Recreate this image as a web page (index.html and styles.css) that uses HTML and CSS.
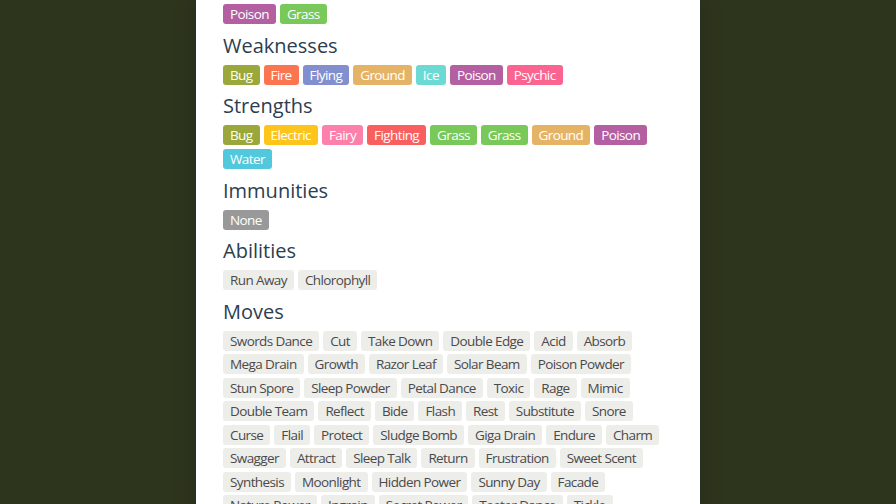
FILE: index.html
```html
<!DOCTYPE html>
<html lang="en">
<head>
<meta charset="utf-8">
<title>Pokémon</title>
<link rel="stylesheet" href="styles.css">
</head>
<body>
<main class="panel">
  <div class="tags">
    <span class="tag poison">Poison</span><span class="tag grass">Grass</span>
  </div>
  <h2>Weaknesses</h2>
  <div class="tags">
    <span class="tag bug">Bug</span><span class="tag fire">Fire</span><span class="tag flying">Flying</span><span class="tag ground">Ground</span><span class="tag ice">Ice</span><span class="tag poison">Poison</span><span class="tag psychic">Psychic</span>
  </div>
  <h2>Strengths</h2>
  <div class="tags">
    <span class="tag bug">Bug</span><span class="tag electric">Electric</span><span class="tag fairy">Fairy</span><span class="tag fighting">Fighting</span><span class="tag grass">Grass</span><span class="tag grass">Grass</span><span class="tag ground">Ground</span><span class="tag poison">Poison</span><span class="tag water">Water</span>
  </div>
  <h2>Immunities</h2>
  <div class="tags">
    <span class="tag none">None</span>
  </div>
  <h2>Abilities</h2>
  <div class="tags">
    <span class="tag plain">Run Away</span><span class="tag plain">Chlorophyll</span>
  </div>
  <h2>Moves</h2>
  <div class="tags moves">
    <span class="tag plain">Swords Dance</span><span class="tag plain">Cut</span><span class="tag plain">Take Down</span><span class="tag plain">Double Edge</span><span class="tag plain">Acid</span><span class="tag plain">Absorb</span>
    <span class="tag plain">Mega Drain</span><span class="tag plain">Growth</span><span class="tag plain">Razor Leaf</span><span class="tag plain">Solar Beam</span><span class="tag plain">Poison Powder</span>
    <span class="tag plain">Stun Spore</span><span class="tag plain">Sleep Powder</span><span class="tag plain">Petal Dance</span><span class="tag plain">Toxic</span><span class="tag plain">Rage</span><span class="tag plain">Mimic</span>
    <span class="tag plain">Double Team</span><span class="tag plain">Reflect</span><span class="tag plain">Bide</span><span class="tag plain">Flash</span><span class="tag plain">Rest</span><span class="tag plain">Substitute</span><span class="tag plain">Snore</span>
    <span class="tag plain">Curse</span><span class="tag plain">Flail</span><span class="tag plain">Protect</span><span class="tag plain">Sludge Bomb</span><span class="tag plain">Giga Drain</span><span class="tag plain">Endure</span><span class="tag plain">Charm</span>
    <span class="tag plain">Swagger</span><span class="tag plain">Attract</span><span class="tag plain">Sleep Talk</span><span class="tag plain">Return</span><span class="tag plain">Frustration</span><span class="tag plain">Sweet Scent</span>
    <span class="tag plain">Synthesis</span><span class="tag plain">Moonlight</span><span class="tag plain">Hidden Power</span><span class="tag plain">Sunny Day</span><span class="tag plain">Facade</span>
    <span class="tag plain">Nature Power</span><span class="tag plain">Ingrain</span><span class="tag plain">Secret Power</span><span class="tag plain">Teeter Dance</span><span class="tag plain">Tickle</span>
  </div>
</main>
</body>
</html>
```
FILE: styles.css
```css
html, body {
  margin: 0;
  padding: 0;
  height: 100%;
  overflow: hidden;
}
body {
  background: #2e351d;
  font-family: "Open Sans", "DejaVu Sans", sans-serif;
}
.panel {
  width: 504px;
  min-height: 100%;
  box-sizing: border-box;
  margin: 0 auto;
  background: #ffffff;
  padding: 4.3px 27px 0 27px;
  box-shadow: 0 0 22px rgba(0, 0, 0, 0.18);
}
h2 {
  margin: 9.3px 0 7.2px 0;
  font-size: 20px;
  line-height: 24px;
  font-weight: 400;
  color: #2c3e50;
}
.tags {
  display: flex;
  flex-wrap: wrap;
  gap: 4px;
}
.moves {
  row-gap: 3.5px;
}
.tag {
  display: block;
  font-size: 13.5px;
  letter-spacing: -0.6px;
  line-height: 20px;
  padding: 0 7px 0 7px;
  border-radius: 3px;
  color: #ffffff;
  white-space: nowrap;
}
.plain {
  background: #ededea;
  color: #4a4a4a;
}
.none { background: #999999; }
.poison { background: #b35fa1; }
.grass { background: #78c85a; }
.bug { background: #9aa83b; }
.fire { background: #fb7650; }
.flying { background: #828fce; }
.ground { background: #e5b366; }
.ice { background: #6cdad4; }
.psychic { background: #fb6491; }
.electric { background: #fdc51c; }
.fairy { background: #fc80aa; }
.fighting { background: #fa5f5f; }
.water { background: #52c8dc; }
```
